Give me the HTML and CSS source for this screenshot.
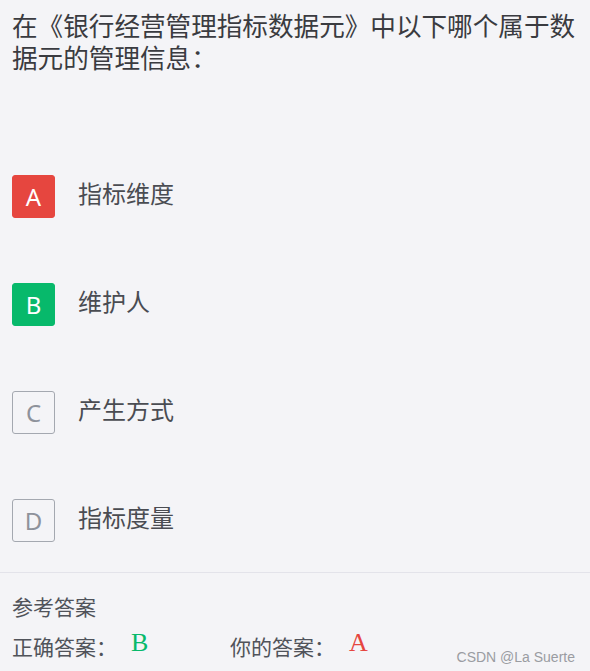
FILE: index.html
```html
<!DOCTYPE html>
<html lang="zh-CN">
<head>
  <meta charset="UTF-8">
  <meta name="viewport" content="width=device-width, initial-scale=1.0">
  <title>题目</title>
  <link rel="stylesheet" href="styles.css">
</head>
<body>
  <div class="page">
    <div class="question">在《银行经营管理指标数据元》中以下哪个属于数据元的管理信息：</div>

    <ul class="options">
      <li class="option">
        <span class="badge wrong">A</span>
        <span class="option-text">指标维度</span>
      </li>
      <li class="option">
        <span class="badge right">B</span>
        <span class="option-text">维护人</span>
      </li>
      <li class="option">
        <span class="badge">C</span>
        <span class="option-text">产生方式</span>
      </li>
      <li class="option">
        <span class="badge">D</span>
        <span class="option-text">指标度量</span>
      </li>
    </ul>

    <div class="answer">
      <div class="answer-title">参考答案</div>
      <div class="answer-row">
        <div class="answer-item correct">正确答案：<span class="letter">B</span></div>
        <div class="answer-item mine">你的答案：<span class="letter">A</span></div>
      </div>
    </div>

    <div class="watermark">CSDN @La Suerte</div>
  </div>
</body>
</html>
```

FILE: styles.css
```css
:root {
  --bg: #f4f4f7;
  --text: #3d3f45;
  --muted: #8e929b;
  --red: #e6463f;
  --green: #07b96b;
  --line: #e3e3ea;
}

* {
  box-sizing: border-box;
  margin: 0;
  padding: 0;
}

html, body {
  height: 100%;
}

body {
  background: var(--bg);
  color: var(--text);
  font-family: "Noto Sans", "Noto Sans CJK SC", sans-serif;
}

.page {
  position: relative;
  height: 100%;
  overflow: hidden;
}

.question {
  padding: 11px 12px 0;
  font-size: 25.6px;
  line-height: 32px;
  color: #3a3b40;
}

.options {
  list-style: none;
  padding: 0 12px;
  margin-top: 100px;
}

.option {
  display: flex;
  align-items: center;
  gap: 24px;
  height: 43px;
  margin-bottom: 65px;
}

.option:last-child {
  margin-bottom: 0;
}

.badge {
  width: 43px;
  height: 43px;
  flex-shrink: 0;
  display: flex;
  align-items: center;
  justify-content: center;
  border: 1px solid #a4a8b0;
  border-radius: 3px;
  font-size: 24px;
  color: var(--muted);
}

.badge.wrong {
  background: var(--red);
  border-color: var(--red);
  color: #fff;
}

.badge.right {
  background: var(--green);
  border-color: var(--green);
  color: #fff;
}

.option-text {
  font-size: 24px;
  color: #4a4c52;
  margin-left: -1px;
  margin-bottom: 9px;
}

.answer {
  margin-top: 30px;
  border-top: 1px solid var(--line);
  padding: 17px 12px 0;
  font-size: 21px;
  color: #50535a;
}

.answer-title {
  line-height: 34px;
}

.answer-row {
  display: flex;
  line-height: 38px;
}

.answer-item.correct {
  width: 218px;
}

.letter {
  margin-left: 14px;
  font-family: "Liberation Serif", "Noto Serif", serif;
  font-size: 26px;
  vertical-align: 4px;
}

.correct .letter {
  color: var(--green);
}

.mine .letter {
  color: var(--red);
}

.watermark {
  position: absolute;
  right: 15px;
  bottom: 6px;
  font-family: "Liberation Sans", sans-serif;
  font-size: 14px;
  color: #9a9ca2;
}
```
